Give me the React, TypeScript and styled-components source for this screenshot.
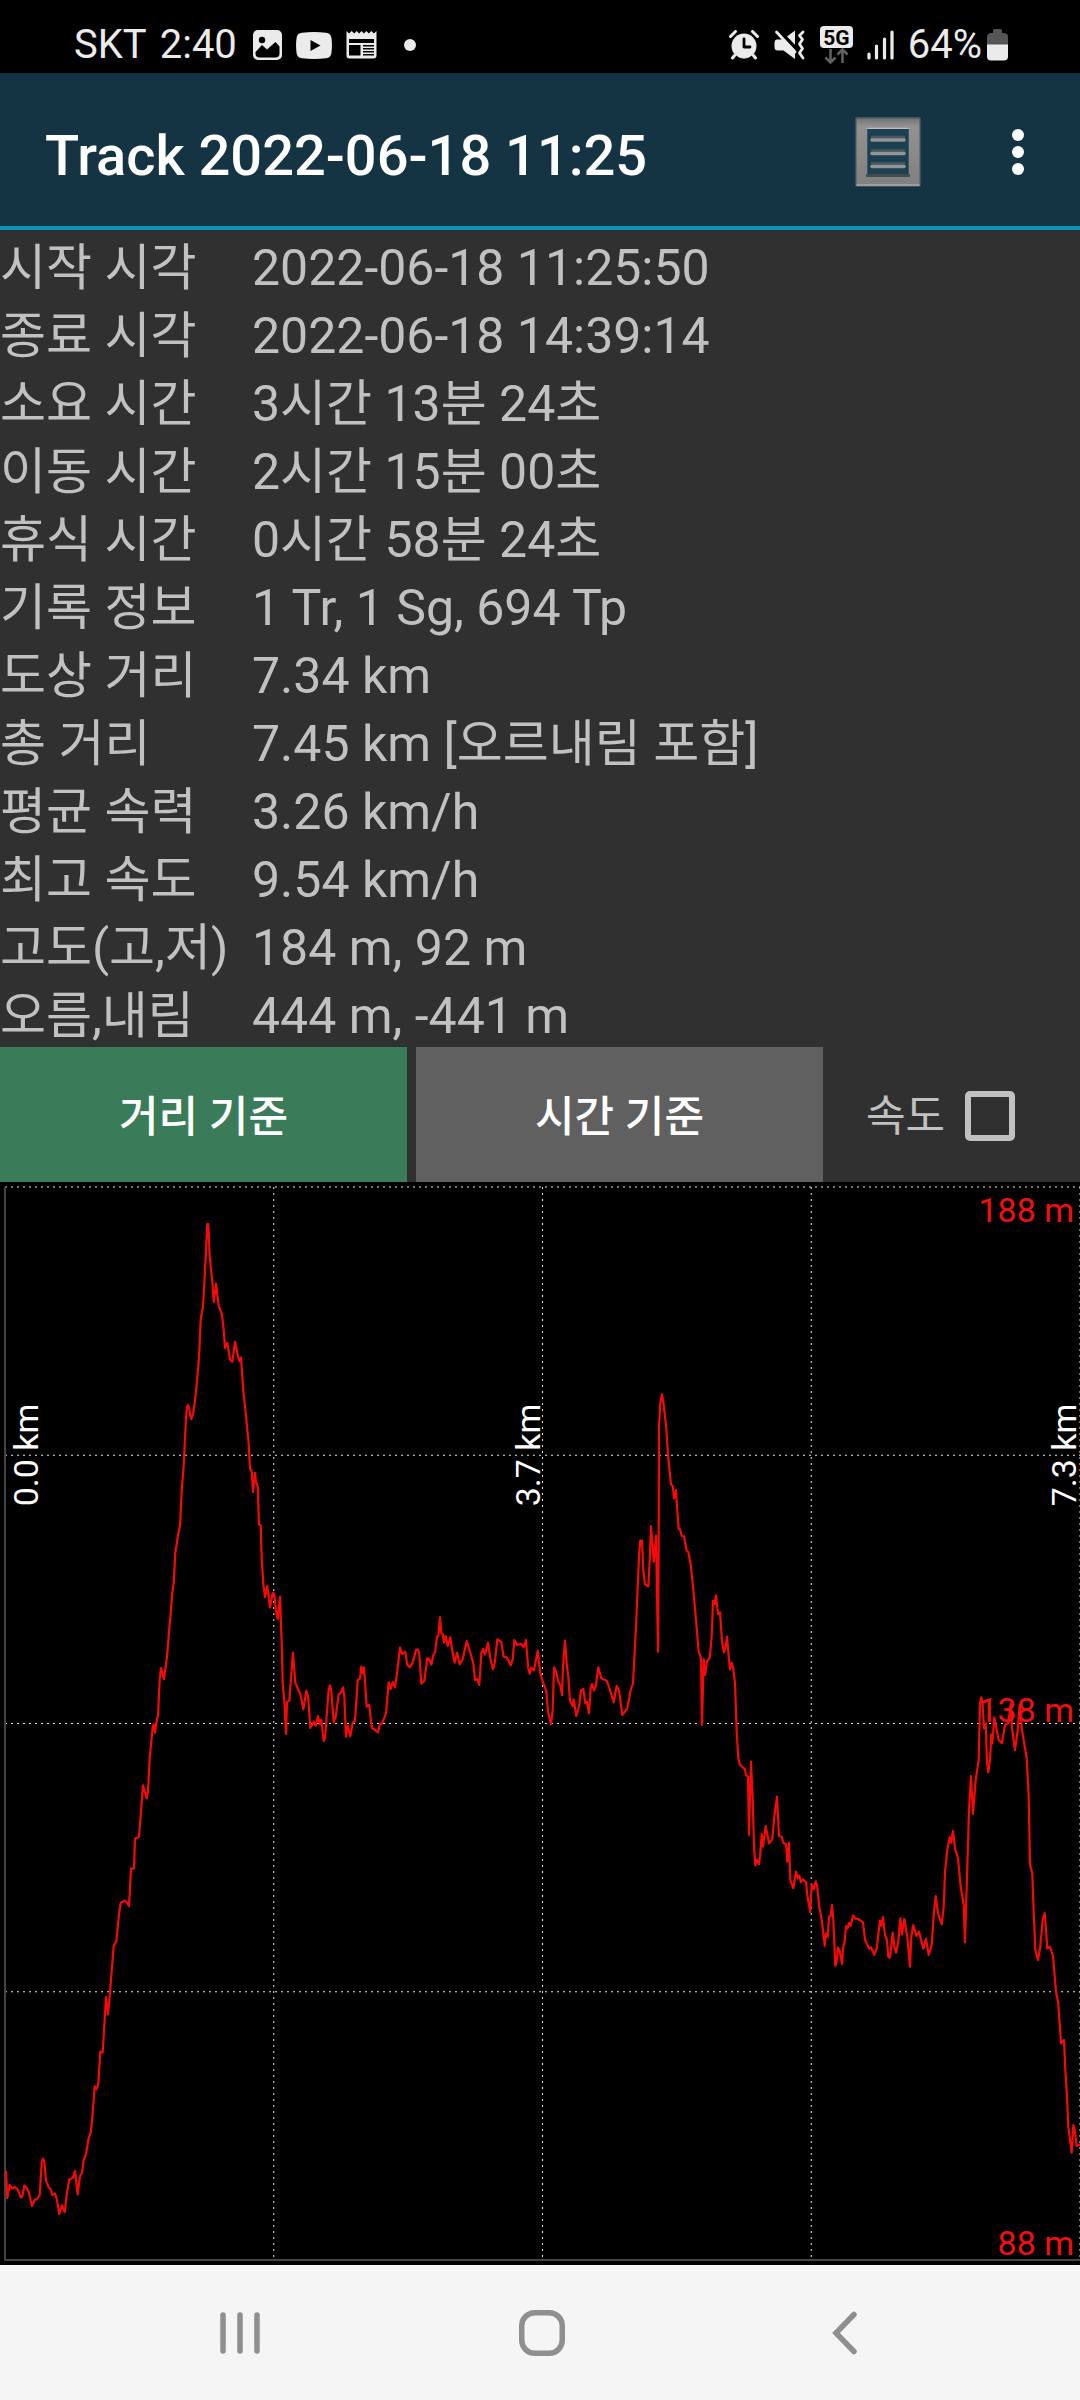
import React, { useState } from "react";
import styled, { createGlobalStyle } from "styled-components";

const GlobalStyle = createGlobalStyle`
  *, *::before, *::after { box-sizing: border-box; }
  html, body { margin: 0; background: #000; }
  body, button, input { font-family: Roboto, "Noto Sans CJK KR", sans-serif; }
`;

const Screen = styled.div`
  display: flex;
  flex-direction: column;
  min-height: 100vh;
  background: #303030;
  color: #c1c1c1;
`;

const StatusBar = styled.div`
  display: flex;
  align-items: center;
  justify-content: space-between;
  height: 73px;
  padding: 17px 72px 0 74px;
  background: #000;
  color: #ebebeb;
  font-size: 40px;
  line-height: 48px;
`;

const StatusGroup = styled.div<{ $gap: number }>`
  display: flex;
  align-items: center;
  gap: ${(p) => p.$gap}px;
`;

const Glyph = styled.svg`
  display: block;
  flex: none;
`;

const AppBar = styled.header`
  display: flex;
  align-items: center;
  height: 157px;
  padding: 4px 12px 0 45px;
  background: #143443;
  border-bottom: 4px solid #0e93b9;
`;

const Title = styled.h1`
  flex: 1;
  margin: 0;
  padding-top: 8px;
  color: #fff;
  font-size: 56px;
  font-weight: 500;
  line-height: 64px;
  white-space: nowrap;
`;

const BarButton = styled.button<{ $width: number }>`
  display: flex;
  align-items: center;
  justify-content: center;
  width: ${(p) => p.$width}px;
  height: 120px;
  padding: 0;
  border: 0;
  background: none;
`;

const Summary = styled.dl`
  margin: 0;
  padding-bottom: 1px;
`;

const SummaryRow = styled.div`
  display: grid;
  grid-template-columns: 252px 1fr;
  padding-top: 8px;
  font-size: 50px;
  line-height: 60px;
  white-space: nowrap;
`;

const Term = styled.dt``;

const Detail = styled.dd`
  margin: 0;
`;

const Controls = styled.div`
  display: flex;
  height: 135px;
`;

const ModeButtons = styled.div`
  display: flex;
  flex: 1;
  gap: 9px;
`;

const ModeButton = styled.button<{ $active: boolean }>`
  flex: 1;
  padding: 4px 0 0;
  border: 0;
  background: ${(p) => (p.$active ? "#3a7c59" : "#606060")};
  color: #fff;
  font-size: 43px;
  font-weight: 500;
  line-height: 52px;
`;

const SpeedLabel = styled.label`
  display: flex;
  align-items: center;
  justify-content: flex-end;
  gap: 20px;
  width: 257px;
  padding: 3px 65px 0 0;
  font-size: 43px;
  line-height: 52px;
`;

const SpeedBox = styled.input`
  appearance: none;
  width: 50px;
  height: 50px;
  margin: 0;
  border: 6px solid #c1c1c1;
  border-radius: 5px;

  &:checked {
    background: #3a7c59;
  }
`;

const Chart = styled.svg`
  display: block;
  width: 100%;
  height: auto;
  background: #000;
`;

const AxisText = styled.text`
  font-family: Roboto, sans-serif;
  font-size: 34px;
`;

const NavBar = styled.nav`
  display: flex;
  height: 135px;
  margin-top: auto;
  padding: 0 85px 0 89px;
  background: #f5f5f5;
`;

const NavButton = styled.button`
  display: flex;
  flex: 1;
  align-items: center;
  justify-content: center;
  padding: 0;
  border: 0;
  background: none;
  color: #8f8f8f;
`;

const SUMMARY: [string, string][] = [
  ["시작 시각", "2022-06-18 11:25:50"],
  ["종료 시각", "2022-06-18 14:39:14"],
  ["소요 시간", "3시간 13분 24초"],
  ["이동 시간", "2시간 15분 00초"],
  ["휴식 시간", "0시간 58분 24초"],
  ["기록 정보", "1 Tr, 1 Sg, 694 Tp"],
  ["도상 거리", "7.34 km"],
  ["총 거리", "7.45 km [오르내림 포함]"],
  ["평균 속력", "3.26 km/h"],
  ["최고 속도", "9.54 km/h"],
  ["고도(고,저)", "184 m, 92 m"],
  ["오름,내림", "444 m, -441 m"],
];

/* Plot area: x 5..1080, y 1187..2260 (88 m at the bottom, 188 m at the top). */
const PLOT = { left: 5, right: 1080, top: 1187, bottom: 2260 };

const TRACK = `
6,2171 7.3,2198 9.7,2184.6 12,2188.6 15,2187 17.7,2189.6 21,2197.6 22.5,2196 24.3,2185.6 26.7,2188
28.7,2192 32,2206 35,2199.5 37.3,2199 39.7,2195 41.7,2162.7 43,2158.7 44.3,2161 46,2180.6 49,2187.8
50.7,2189.3 52.3,2195 55,2193.6 57,2200 59.3,2214 62,2205.3 64.7,2212 67,2192.5 69.3,2179.8 73,2177.6
75,2171 77.7,2194.4 80,2176 82,2173 83.7,2160 86,2154.4 88.7,2138 90.7,2132.6 92,2121.7 94.7,2086.4
96.7,2089 98.3,2083.5 100.3,2051.5 102.7,2052.6 106,1997 108,2014.4 110.3,1989 113.7,1945.7
116.3,1941.4 119,1914.5 120.7,1902.8 124.7,1900.7 127,1902.5 129,1906 131,1868.7 134,1868.3
135,1838.5 139,1837 143,1785.4 146.7,1798.5 148,1791.6 149.7,1758 152.7,1727 153.7,1724.4 155,1732.7
156.7,1720.7 158,1715.7 159.7,1680 161,1668 164,1679 167,1656.8 169,1631.8 170.7,1614 172.3,1592.5
173.7,1583.6 175.3,1553 178,1535 180,1525.7 181.7,1490.7 183.7,1465.7 186,1417.5 187,1406.8 188,1405
189.3,1408.6 190,1414.6 191.3,1419 193,1414 195,1401 196.7,1383.6 199,1358.6 200.7,1319 203,1306.8
204.3,1283.6 206,1251 207.3,1224 208.3,1224 209.7,1256.8 212,1278 213.7,1302 216,1283.6 218.7,1305.7
222,1314.6 223.7,1330 225,1348 227.3,1343 230,1359.6 232.3,1361.8 235,1341.8 238.3,1357.9 239.3,1361
241,1357.5 243.3,1390.7 246,1415.7 248.7,1444 250,1468.6 251.7,1471 253,1491.8 255,1472.9 256,1481.8
257.7,1486.4 259,1524.6 260.7,1525.4 261.7,1558.6 263.3,1583.6 265,1597 267.3,1586 270,1607.5
272.7,1593 274.3,1593.6 275.7,1608.6 277.7,1619 280,1596.8 281.7,1644 282.7,1683.6 284.3,1701
286,1734 287,1701.7 289.3,1700.7 293,1652.7 295.3,1682.7 300.7,1695.3 303.3,1709.3 306.3,1690.7
308.3,1698 310.3,1728 313.7,1721.7 315.7,1725.7 318,1716 319.7,1724 321.3,1720 323.7,1741 325,1738.3
328.7,1689.3 330,1685.3 331.3,1690.7 333.7,1722.3 335.7,1716.7 338.7,1694.3 341,1692.7 343,1687.3
344.3,1696.7 346,1736.7 347.7,1726 350.3,1736.3 352.7,1722.7 355,1720.7 357.7,1680.3 360,1678.3
361.3,1666.7 362.7,1673.3 364,1667.3 366.7,1706.7 369.3,1705 371.7,1727.7 374.3,1729.3 378,1732.3
379.7,1725 382,1723.3 386,1713.3 388.7,1682.3 390.7,1689 392.7,1682 395,1687.3 397,1673.3 400,1647.7
402,1654 405.3,1652 407.3,1665 410,1667.3 412.7,1662.7 416,1650 417.7,1649.3 419.3,1654 421.3,1683.7
424.3,1681 427.3,1658.3 429,1659 431.3,1664.7 433.3,1655 435,1652.7 437,1636.7 438.3,1636 440,1617.3
441.3,1632.7 442.7,1634.3 444,1642.3 445.7,1636 447.7,1646 450.3,1637.3 452.7,1653.3 454.7,1662.7
457,1652.7 459.7,1664.3 462.7,1659.3 466.7,1641 470,1651.7 473.3,1663.3 475,1680 477.3,1679
479.3,1685 481.3,1653.3 483,1649 485,1654.3 488,1642.7 490,1656.7 493,1669.3 494.7,1663.3
497.3,1639.3 501.3,1642 503.7,1656.7 506.7,1657.3 510.7,1665.3 512.7,1659.3 514.3,1640 517.3,1645
521,1643.7 523.7,1647.3 526,1640 528,1666.7 529.7,1673.7 531.3,1667.7 534,1670.3 537.7,1650.7
540.3,1673.3 542.7,1681.7 546.3,1690.7 548,1711.7 551,1724.3 552.7,1710 554,1667.3 556,1671.7
558.3,1681.7 560.3,1685 562,1695 563,1666.7 565,1640.7 566.7,1663.3 568.3,1676.7 570,1701 572.7,1706
573.7,1699.3 576.3,1716 579,1706.7 581,1690 583.3,1689 585.3,1703.3 587,1701.7 589,1713.3
590.7,1688.3 592,1684 594,1690.3 596,1685 598.3,1667.3 601.3,1678.3 606.7,1680.7 610,1690
613.7,1702.3 616.7,1686 619,1690 622.3,1715 627.3,1708.3 630.7,1690 633,1683.3 635.7,1633.3
639,1556.7 640.3,1540.7 642,1540.7 643.3,1570 645,1584.3 648.3,1586.3 649.7,1560 651,1526
653.7,1562 656,1535.7 658,1651.7 658.7,1526.7 659,1426.7 660.3,1403.3 662,1394.3 663.3,1401.7
666.3,1428.3 668,1455 671,1484.3 672.7,1486 674,1498.3 676,1490 677,1506.7 678.7,1529 680,1529.3
681.7,1536 684,1536.3 686.7,1551 688.3,1551.7 691,1566.7 693.3,1590 695.7,1616.7 698.7,1651.7
701,1658.3 702,1725 703.7,1659 705,1675 707,1661.7 709.7,1657.7 711.7,1636.7 713,1600.7 714.7,1604
716,1595.3 718,1614 720,1612.3 722,1641.7 724,1652.3 725.7,1646.7 727,1636.7 728.7,1656.7 730,1669.3
731.7,1662.7 733.3,1668.3 735,1683.3 736.7,1731.7 738.3,1758.3 740,1764.7 745,1769.3 746,1775.3
748,1776.7 749,1835 751,1761.7 752.7,1800 754,1846.7 755.3,1865.3 757,1860 759,1864.3 760.3,1853.3
761.7,1834 763,1846.7 765.7,1826 769,1843.3 772.3,1839.3 774.3,1816.7 777,1796.7 779,1836
781.7,1836.7 783.3,1842.7 786,1844 787.3,1861.7 789,1842.7 790.3,1880 793.3,1888.3 796,1871.7
798,1878.3 799.3,1875.7 801,1882.3 802.7,1879.3 806,1882 807.7,1898.3 810.3,1912 811.7,1884.3
813.7,1889.3 815.7,1881.3 817,1885 819.3,1906.7 822,1921.7 824.7,1946 826,1933.3 827.7,1936.7
829,1916.7 830.7,1916 832,1905 833.3,1920 835.3,1965.7 836.7,1961.7 838,1947.7 839.7,1950.7 842,1964
843.3,1946.7 844.7,1941.7 846,1926 847.7,1928.3 849.3,1922.7 850.7,1925.7 853,1915.3 855.3,1918.7
858.3,1919 863,1922.3 865,1940 869.3,1948.7 871,1947.3 874.3,1954.7 876.7,1948.3 880,1920.7
881.3,1925.7 883,1917 885,1935 887,1940 888.3,1956.7 890,1957.7 892.7,1932.7 894.3,1946.7 896,1952.7
898.3,1941.7 900.3,1918.3 902,1934.3 904.3,1919 907.3,1936.7 910,1966.7 911.3,1936.7 913.3,1925
916.3,1936 919,1931.7 923.3,1948.7 926,1938.7 928.7,1955 931.7,1945 933.7,1915 935.7,1896 938,1913.3
941.7,1924.3 943.7,1906.7 945,1871.7 947.3,1850 949.7,1837.3 951,1842.7 953,1831 955,1848.3
958,1858.3 960.7,1886.7 963.7,1905 965,1942.3 967.3,1866.7 969,1810 971,1776 973,1814 975.7,1780
978.7,1760 980,1703.3 981.3,1697.3 982.7,1705 984,1728.3 985.7,1723.3 987,1761.7 988.3,1772.3
990,1760 991.3,1734.3 992.3,1743.3 994.3,1717.3 996.7,1730 998.7,1740 1002,1743.3 1005,1725
1008.3,1723.3 1010.7,1704 1012.3,1730 1015,1750 1017.7,1730 1019.7,1705 1022,1730 1026.7,1758.3
1028.7,1796.7 1030,1865 1032.3,1873.3 1033.7,1913.3 1035.3,1950 1038,1960 1040.3,1946.7 1042.7,1920
1044.7,1913 1046,1930 1047.3,1948.3 1050,1946.7 1053,1956 1056,1991.7 1058.3,2003.3 1061,2043.3
1064,2040 1065.3,2070 1067,2096.7 1068.3,2126.7 1071.7,2152.7 1073.3,2125 1075,2131.7 1076.7,2146
1080,2144.3`;

const QUARTERS = [0, 1, 2, 3, 4];
const quarterX = (i: number) => PLOT.left + ((PLOT.right - PLOT.left) * i) / 4;
const quarterY = (i: number) => PLOT.top + ((PLOT.bottom - PLOT.top) * i) / 4;

function ElevationChart() {
  return (
    <Chart viewBox="0 1182 1080 1083" role="img" aria-label="고도 그래프">
      <g stroke="#e6e6e6" strokeWidth="1" strokeDasharray="2 4">
        {QUARTERS.slice(0, 4).map((i) => (
          <line key={`h${i}`} x1={PLOT.left} x2={PLOT.right} y1={quarterY(i)} y2={quarterY(i)} />
        ))}
        {QUARTERS.slice(1).map((i) => (
          <line key={`v${i}`} x1={quarterX(i)} x2={quarterX(i)} y1={PLOT.top} y2={PLOT.bottom} />
        ))}
      </g>
      <path
        d={`M${PLOT.left} ${PLOT.top}V${PLOT.bottom}H${PLOT.right}`}
        fill="none"
        stroke="#444"
        strokeWidth="2"
      />
      <polyline points={TRACK} fill="none" stroke="#f80808" strokeWidth="2.2" strokeLinejoin="round" />
      <g fill="#f01010" textAnchor="end">
        <AxisText x="1074" y="1222">188 m</AxisText>
        <AxisText x="1074" y="1722">138 m</AxisText>
        <AxisText x="1074" y="2255">88 m</AxisText>
      </g>
      <g fill="#fff" textAnchor="middle">
        <AxisText transform="translate(38 1455) rotate(-90)">0.0 km</AxisText>
        <AxisText transform="translate(540 1455) rotate(-90)">3.7 km</AxisText>
        <AxisText transform="translate(1076 1455) rotate(-90)">7.3 km</AxisText>
      </g>
    </Chart>
  );
}

function PictureIcon() {
  return (
    <Glyph width="29" height="30" viewBox="0 0 29 30">
      <rect width="29" height="30" rx="5" fill="#ebebeb" />
      <circle cx="9" cy="10" r="3.2" fill="#000" />
      <path d="M2.5 22l6.5-7 5 4.500 8.500-7.500 4 4.500v7q0 4-4 4h-16q-4 0-4-4z" fill="#000" />
    </Glyph>
  );
}

function VideoIcon() {
  return (
    <Glyph width="36" height="27" viewBox="0 0 36 27">
      <path d="M6 .8Q18-.6 30 .8q4.800.4 5.400 5 1.100 7.700 0 15.400-.6 4.600-5.400 5-12 1.400-24 0-4.800-.4-5.400-5-1.100-7.700 0-15.400Q1.200 1.200 6 .8z" fill="#ebebeb" />
      <path d="M14.500 8v11l10-5.500z" fill="#000" />
    </Glyph>
  );
}

function NewsIcon() {
  return (
    <Glyph width="31" height="28" viewBox="0 0 31 28">
      <path d="M.5 0l2.600 2.500L5.700 0l2.600 2.500L10.700 0l2.500 2.500L15.500 0l2.400 2.500L20.300 0l2.600 2.500L25.300 0l2.600 2.500L30.500 0v24.500q0 3-3 3h-24q-3 0-3-3z" fill="#ebebeb" />
      <path d="M3 8h25v4H3zM3 14h11.500v10.500H3zM17 14h11v1.500H17zM17 17h11v1.500H17zM17 20h11v1.500H17zM17 23h11v1.500H17z" fill="#000" />
    </Glyph>
  );
}

function DotIcon() {
  return (
    <Glyph width="38" height="12" viewBox="0 0 38 12">
      <circle cx="19" cy="6" r="6" fill="#ebebeb" />
    </Glyph>
  );
}

function AlarmIcon() {
  return (
    <Glyph width="30" height="30" viewBox="0 0 30 30">
      <circle cx="15" cy="16" r="12.500" fill="#ebebeb" />
      <path d="M1.500 6.500l5-5M28.500 6.500l-5-5M5.500 25.500L3.500 28M24.500 25.500l2 2.500" stroke="#ebebeb" strokeWidth="3" strokeLinecap="round" />
      <path d="M15 9v8h6" stroke="#000" strokeWidth="2.800" fill="none" strokeLinecap="round" strokeLinejoin="round" />
    </Glyph>
  );
}

function MuteIcon() {
  return (
    <Glyph width="31" height="30" viewBox="0 0 31 30">
      <path d="M2.500 9.500H9L21 .5v28.500L9.500 20.500H4q-3.500 0-3.500-3.500v-4.500Q.5 10 2.500 9.500z" fill="#ebebeb" />
      <path d="M3.500-1L24 20.500" stroke="#000" strokeWidth="3.500" />
      <path d="M2.500 2l18.500 20" stroke="#ebebeb" strokeWidth="2.800" strokeLinecap="round" />
      <path d="M29 2l-3.500 3.500 3 4-3 4.500 3 4.500-3 4.500 3.500 5" stroke="#ebebeb" strokeWidth="2.800" fill="none" strokeLinecap="round" strokeLinejoin="round" />
    </Glyph>
  );
}

function NetworkIcon() {
  return (
    <Glyph width="33" height="38" viewBox="0 0 33 38">
      <rect width="33" height="22" rx="4" fill="#ebebeb" />
      <text x="16.500" y="18.500" textAnchor="middle" fontFamily="Roboto, sans-serif" fontWeight="700" fontSize="21" fill="#000">
        5G
      </text>
      <path d="M10.500 23v13M5.500 31.500l5 5 5-5M22.500 37V24M17.500 28.500l5-5 5 5" stroke="#606060" strokeWidth="2.600" fill="none" />
    </Glyph>
  );
}

function SignalIcon() {
  return (
    <Glyph width="27" height="30" viewBox="0 0 27 30">
      <path d="M2 24v4M9.500 16v12M17.500 9v19M25 2v26" stroke="#ebebeb" strokeWidth="3.200" strokeLinecap="round" />
    </Glyph>
  );
}

function BatteryIcon() {
  return (
    <Glyph width="21" height="32" viewBox="0 0 21 32">
      <path d="M0 16V8q0-3.500 3.500-4H6V1.500Q6 0 7.500 0h6Q15 0 15 1.500V4h2.500Q21 4.500 21 8v8z" fill="#555" />
      <path d="M0 15.500h21v12q0 4-4 4H4q-4 0-4-4z" fill="#ebebeb" />
    </Glyph>
  );
}

function ListIcon() {
  return (
    <Glyph width="66" height="70" viewBox="0 0 66 70">
      <defs>
        <linearGradient id="frame" x1="0" y1="0" x2="0" y2="1">
          <stop offset="0" stopColor="#747474" />
          <stop offset=".12" stopColor="#929292" />
          <stop offset="1" stopColor="#808080" />
        </linearGradient>
      </defs>
      <rect width="66" height="70" rx="2" fill="#3f535d" />
      <rect x="1.500" y="1.500" width="63" height="67" fill="url(#frame)" />
      <path d="M1.500 68h63" stroke="#adadad" strokeWidth="1.500" />
      <path d="M12 11.500h42" stroke="#bbb" strokeWidth="1.500" />
      <rect x="12" y="12" width="42" height="48" fill="#1b4052" />
      <path d="M11 58.500h44" stroke="#454a4d" strokeWidth="3" />
      <path d="M12.500 12v46M53.500 12v46" stroke="#44545d" strokeWidth="1" />
      {[22, 35.5, 48.5].map((y) => (
        <g key={y}>
          <path d={`M16 ${y - 2}h34`} stroke="#4b5960" strokeWidth="2.500" />
          <path d={`M17 ${y + 1}h32`} stroke="#949494" strokeWidth="3.500" strokeLinecap="round" />
        </g>
      ))}
    </Glyph>
  );
}

function MoreIcon() {
  return (
    <Glyph width="12" height="48" viewBox="0 0 12 48" fill="#fff">
      <circle cx="6" cy="7" r="6" />
      <circle cx="6" cy="24" r="6" />
      <circle cx="6" cy="41" r="6" />
    </Glyph>
  );
}

export default function App() {
  const [mode, setMode] = useState<"distance" | "time">("distance");
  return (
    <>
      <GlobalStyle />
      <Screen>
        <StatusBar>
          <StatusGroup $gap={16}>
            <StatusGroup $gap={13}>
              <span>SKT</span>
              <span>2:40</span>
            </StatusGroup>
            <StatusGroup $gap={14}>
              <PictureIcon />
              <VideoIcon />
              <NewsIcon />
              <DotIcon />
            </StatusGroup>
          </StatusGroup>
          <StatusGroup $gap={14}>
            <StatusGroup $gap={15}>
              <AlarmIcon />
              <MuteIcon />
              <NetworkIcon />
            </StatusGroup>
            <SignalIcon />
            <StatusGroup $gap={5}>
              <span>64%</span>
              <BatteryIcon />
            </StatusGroup>
          </StatusGroup>
        </StatusBar>

        <AppBar>
          <Title>Track 2022-06-18 11:25</Title>
          <BarButton $width={160} type="button" aria-label="목록">
            <ListIcon />
          </BarButton>
          <BarButton $width={100} type="button" aria-label="메뉴">
            <MoreIcon />
          </BarButton>
        </AppBar>

        <Summary>
          {SUMMARY.map(([term, detail]) => (
            <SummaryRow key={term}>
              <Term>{term}</Term>
              <Detail>{detail}</Detail>
            </SummaryRow>
          ))}
        </Summary>

        <Controls>
          <ModeButtons>
            <ModeButton type="button" $active={mode === "distance"} onClick={() => setMode("distance")}>
              거리 기준
            </ModeButton>
            <ModeButton type="button" $active={mode === "time"} onClick={() => setMode("time")}>
              시간 기준
            </ModeButton>
          </ModeButtons>
          <SpeedLabel htmlFor="speed">
            속도
            <SpeedBox id="speed" type="checkbox" />
          </SpeedLabel>
        </Controls>

        <ElevationChart />

        <NavBar>
          <NavButton type="button" aria-label="최근 앱">
            <Glyph width="40" height="44" viewBox="0 0 40 44">
              <path d="M3 4v36M20 4v36M37 4v36" stroke="currentColor" strokeWidth="5.500" strokeLinecap="round" />
            </Glyph>
          </NavButton>
          <NavButton type="button" aria-label="홈">
            <Glyph width="46" height="46" viewBox="0 0 46 46">
              <rect x="2.750" y="2.750" width="40.500" height="40.500" rx="13" fill="none" stroke="currentColor" strokeWidth="5.500" />
            </Glyph>
          </NavButton>
          <NavButton type="button" aria-label="뒤로">
            <Glyph width="25" height="44" viewBox="0 0 25 44">
              <path d="M22 3.500L4 22l18 18.500" fill="none" stroke="currentColor" strokeWidth="5.500" strokeLinecap="round" />
            </Glyph>
          </NavButton>
        </NavBar>
      </Screen>
    </>
  );
}
